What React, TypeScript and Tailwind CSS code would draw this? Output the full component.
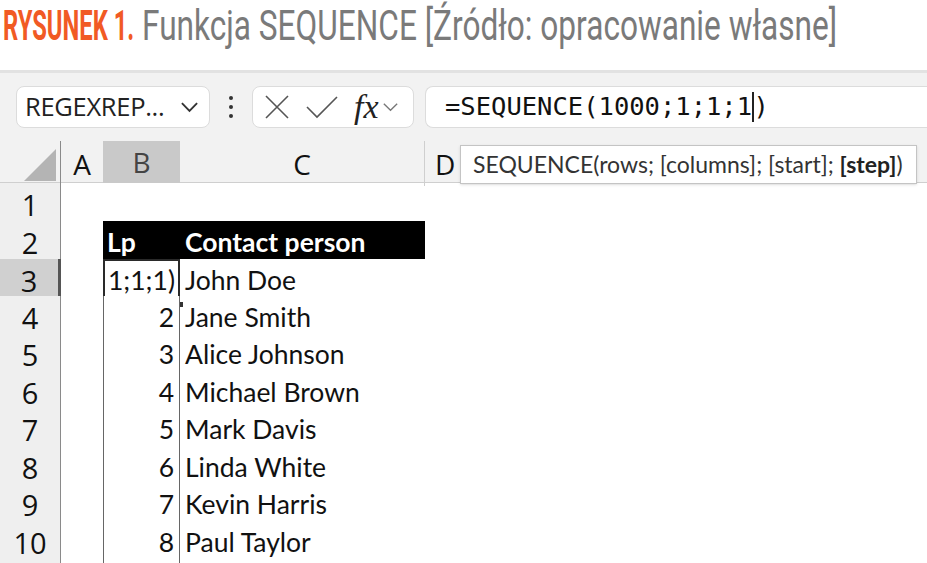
import React from 'react';

const ROWS: { n: number; b: string; c: string }[] = [
  { n: 1, b: '', c: '' },
  { n: 2, b: 'Lp', c: 'Contact person' },
  { n: 3, b: '1;1;1)', c: 'John Doe' },
  { n: 4, b: '2', c: 'Jane Smith' },
  { n: 5, b: '3', c: 'Alice Johnson' },
  { n: 6, b: '4', c: 'Michael Brown' },
  { n: 7, b: '5', c: 'Mark Davis' },
  { n: 8, b: '6', c: 'Linda White' },
  { n: 9, b: '7', c: 'Kevin Harris' },
  { n: 10, b: '8', c: 'Paul Taylor' },
];

const uiFont = { fontFamily: '"Open Sans", "Noto Sans", sans-serif' };
const cellFont = { fontFamily: 'Lato, "Open Sans", sans-serif' };
const monoFont = { fontFamily: '"DejaVu Sans Mono", "Liberation Mono", monospace' };

function Chevron({ className, width = 1.6 }: { className?: string; width?: number }) {
  return (
    <svg viewBox="0 0 20 12" className={className} fill="none" stroke="currentColor" strokeWidth={width}>
      <path d="M2 2 L10 10 L18 2" />
    </svg>
  );
}

function FormulaBar() {
  return (
    <div className="h-[68px] flex items-center pl-[16px]">
      {/* Name box */}
      <div className="w-[194px] h-[42px] bg-white border border-[#dcdcdc] rounded-[8px] flex items-center pl-[8px] pr-[10px] text-[#222]" style={uiFont}>
        <span className="text-[25.5px] leading-none tracking-[-0.3px]">REGEXREP...</span>
        <Chevron className="w-[19px] h-[12px] ml-auto text-[#333]" width={2} />
      </div>
      {/* dots */}
      <div className="w-[42px] flex flex-col items-center gap-[5px]">
        <span className="w-[4px] h-[4px] rounded-full bg-[#333]" />
        <span className="w-[4px] h-[4px] rounded-full bg-[#333]" />
        <span className="w-[4px] h-[4px] rounded-full bg-[#333]" />
      </div>
      {/* buttons */}
      <div className="w-[162px] h-[42px] bg-white border border-[#dcdcdc] rounded-[8px] flex items-center pl-[10px] text-[#555]">
        <svg viewBox="0 0 28 28" className="w-[28px] h-[28px]" fill="none" stroke="currentColor" strokeWidth={1.6}>
          <path d="M3 3 L25 25 M25 3 L3 25" />
        </svg>
        <svg viewBox="0 0 34 24" className="w-[34px] h-[24px] ml-[14px]" fill="none" stroke="currentColor" strokeWidth={1.6}>
          <path d="M2 12 L12 22 L32 2" />
        </svg>
        <span className="ml-[15px] text-[34px] leading-none italic text-[#222]" style={{ fontFamily: '"Liberation Serif", serif' }}>fx</span>
        <Chevron className="w-[17px] h-[10px] ml-[3px] text-[#777]" />
      </div>
      {/* formula */}
      <div className="ml-[11px] flex-1 h-[42px] bg-white border border-[#dcdcdc] border-r-0 rounded-l-[8px] flex items-center pl-[19px] text-[#111]">
        <span className="text-[25.5px] leading-none" style={monoFont}>=SEQUENCE(1000;1;1;1</span>
        <span className="w-[1.5px] h-[30px] bg-[#222]" />
        <span className="text-[25.5px] leading-none" style={monoFont}>)</span>
      </div>
    </div>
  );
}

function ColumnHeader() {
  return (
    <div className="relative h-[42px] grid grid-cols-[61px_42px_77px_245px_1fr] text-[28px] text-[#111] border-b border-[#cfcfcf]" style={uiFont}>
      <div className="border-r border-[#8a8a8a] flex items-end justify-end pr-[4px] pb-[5px]">
        <svg viewBox="0 0 32 32" className="w-[32px] h-[32px]">
          <path d="M32 0 L32 32 L0 32 Z" fill="#b4b4b4" />
        </svg>
      </div>
      <div className="flex items-center justify-center">A</div>
      <div className="flex items-center justify-center bg-[#c9c9c9] text-[#444] border-b-[3px] border-[#555]">B</div>
      <div className="flex items-center justify-center border-r border-[#cfcfcf]">C</div>
      <div className="flex items-center pl-[10px]">D</div>
      {/* tooltip */}
      <div className="absolute left-[460px] top-[4px] w-[457px] h-[39px] bg-white border border-[#c4c4c4] shadow-sm flex items-center pl-[12px] text-[23px] text-[#333] whitespace-nowrap" style={cellFont}>
        SEQUENCE(rows; [columns]; [start];&nbsp;<b className="font-bold text-[#222]">[step]</b>)
      </div>
    </div>
  );
}

function Grid() {
  return (
    <div>
      {ROWS.map(r => {
        const isHead = r.n === 2;
        const isActive = r.n === 3;
        const isData = r.n > 3;
        let bCls = 'bg-white text-[#111] justify-end pr-[5px]';
        if (isHead) bCls = 'bg-black text-white font-bold justify-start pl-[4px]';
        if (isActive) bCls = 'bg-white text-[#111] justify-end pr-[5px] shadow-[inset_0_0_0_2px_#2a2a2a]';
        if (isData) bCls = 'bg-white text-[#111] justify-end pr-[5px] border-l border-r border-[#666]';
        return (
          <div
            key={r.n}
            className={`h-[37.5px] grid grid-cols-[61px_42px_77px_245px_1fr] ${isActive ? 'border-t border-[#9a9a9a]' : ''}`}
          >
            <div
              className={`flex items-center justify-center text-[29px] text-[#111] border-b border-[#cdcdcd] ${isActive ? 'bg-[#d0d0d0] border-r-[3px] border-r-[#555]' : 'bg-[#efefef] border-r border-r-[#8a8a8a]'}`}
              style={uiFont}
            >
              {r.n}
            </div>
            <div className="bg-white" />
            <div className={`relative z-10 flex items-center text-[26.5px] ${bCls}`} style={cellFont}>
              {r.b}
              {isActive && (
                <span className="absolute z-20 -right-[4px] -bottom-[4px] w-[7px] h-[7px] bg-[#333] border border-white" />
              )}
            </div>
            <div
              className={`flex items-center pl-[5px] text-[26.5px] ${isHead ? 'bg-black text-white font-bold' : 'bg-white text-[#111]'}`}
              style={cellFont}
            >
              {r.c}
            </div>
            <div className="bg-white" />
          </div>
        );
      })}
    </div>
  );
}

export default function App() {
  return (
    <div className="w-[927px] h-[563px] bg-white overflow-hidden">
      {/* Caption */}
      <div className="h-[70px] flex items-start pt-[1px] pl-[3px]" style={{ fontFamily: 'Roboto, "Liberation Sans", sans-serif' }}>
        <div className="w-[139px]">
          <span className="inline-block origin-left scale-x-[0.553] whitespace-nowrap text-[43px] leading-[48px] font-bold text-[#f15a24]">
            RYSUNEK 1.
          </span>
        </div>
        <div>
          <span className="inline-block origin-left scale-x-[0.735] whitespace-nowrap text-[43px] leading-[48px] text-[#7a7a7a]">
            Funkcja SEQUENCE [Źródło: opracowanie własne]
          </span>
        </div>
      </div>

      {/* Spreadsheet */}
      <div className="h-[493px] bg-[#f2f2f2] border-t-[3px] border-[#e2e2e2] overflow-hidden">
        <FormulaBar />
        <ColumnHeader />
        <Grid />
      </div>
    </div>
  );
}
